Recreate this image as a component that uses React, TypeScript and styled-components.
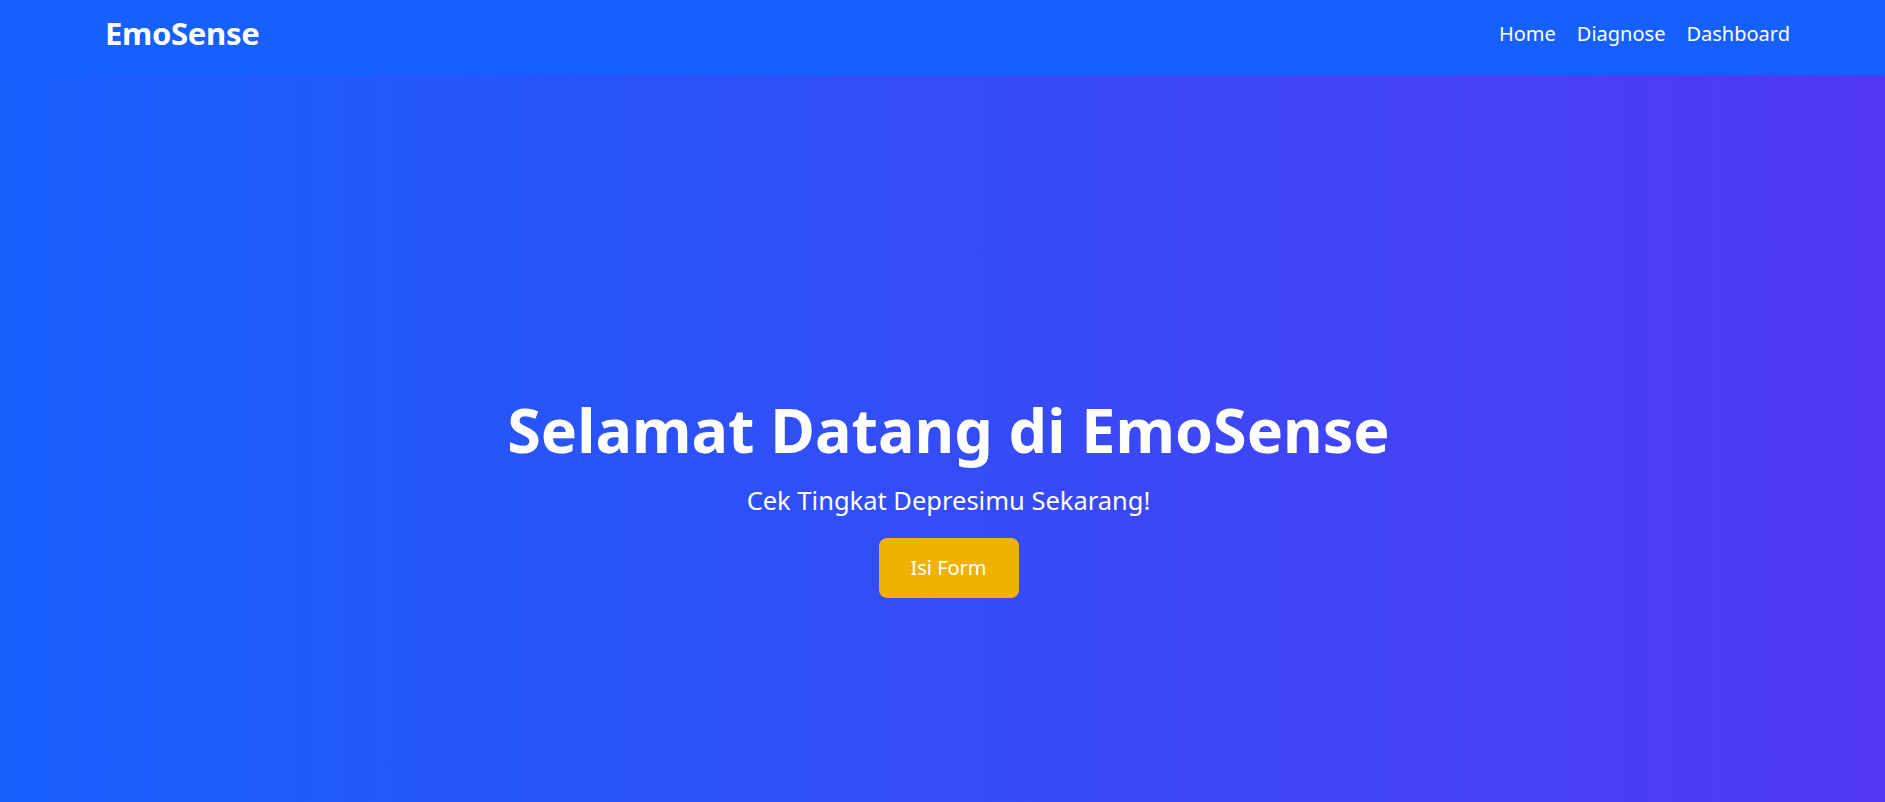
import React from "react";
import styled, { createGlobalStyle } from "styled-components";

const GlobalStyle = createGlobalStyle`
  * {
    box-sizing: border-box;
  }
  body {
    margin: 0;
    font-family: "Noto Sans", "Open Sans", sans-serif;
    color: #fff;
  }
`;

const Page = styled.div`
  min-height: 100vh;
  display: flex;
  flex-direction: column;
  background: linear-gradient(to right, #1660fe, #5239f4);
`;

const Navbar = styled.nav`
  height: 75px;
  background-color: #1660ff;
  display: flex;
  align-items: center;
  justify-content: space-between;
  padding: 0 95px 7px 105px;
`;

const Brand = styled.a`
  font-size: 31px;
  font-weight: 700;
  line-height: 1.2;
  color: #fff;
  text-decoration: none;
  letter-spacing: -0.3px;
`;

const NavLinks = styled.ul`
  list-style: none;
  margin: 0;
  padding: 0;
  display: flex;
  gap: 21px;
`;

const NavLink = styled.a`
  font-size: 20px;
  line-height: 1.2;
  color: #fff;
  text-decoration: none;
`;

const Hero = styled.section`
  flex: 1;
  display: flex;
  flex-direction: column;
  align-items: center;
  justify-content: center;
  text-align: center;
  padding: 114px 0 0 12px;
`;

const Title = styled.h1`
  margin: 0 0 15px;
  font-size: 61px;
  font-weight: 700;
  line-height: 1.2;
`;

const Subtitle = styled.p`
  margin: 0 0 18px;
  font-size: 25.5px;
  line-height: 1.5;
`;

const FormButton = styled.button`
  width: 140px;
  height: 60px;
  border: none;
  border-radius: 8px;
  background-color: #f1b100;
  color: #fff;
  font-family: inherit;
  font-size: 20px;
  cursor: pointer;
`;

export default function App() {
  return (
    <>
      <GlobalStyle />
      <Page>
        <Navbar>
          <Brand href="#">EmoSense</Brand>
          <NavLinks>
            <li>
              <NavLink href="#">Home</NavLink>
            </li>
            <li>
              <NavLink href="#">Diagnose</NavLink>
            </li>
            <li>
              <NavLink href="#">Dashboard</NavLink>
            </li>
          </NavLinks>
        </Navbar>
        <Hero>
          <Title>Selamat Datang di EmoSense</Title>
          <Subtitle>Cek Tingkat Depresimu Sekarang!</Subtitle>
          <FormButton>Isi Form</FormButton>
        </Hero>
      </Page>
    </>
  );
}
